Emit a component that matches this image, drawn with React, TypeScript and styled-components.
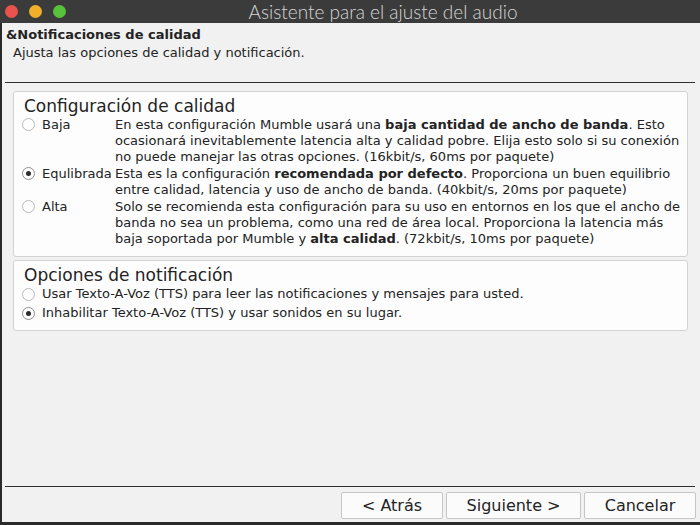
import React from 'react';
import styled, { createGlobalStyle } from 'styled-components';

interface QualityOption {
  id: string;
  label: string;
  lines: React.ReactNode[];
  checked?: boolean;
}

const qualityOptions: QualityOption[] = [
  {
    id: 'low',
    label: 'Baja',
    lines: [
      <>En esta configuración Mumble usará una <b>baja cantidad de ancho de banda</b>. Esto</>,
      <>ocasionará inevitablemente latencia alta y calidad pobre. Elija esto solo si su conexión</>,
      <>no puede manejar las otras opciones. (16kbit/s, 60ms por paquete)</>,
    ],
  },
  {
    id: 'balanced',
    label: 'Equlibrada',
    checked: true,
    lines: [
      <>Esta es la configuración <b>recomendada por defecto</b>. Proporciona un buen equilibrio</>,
      <>entre calidad, latencia y uso de ancho de banda. (40kbit/s, 20ms por paquete)</>,
    ],
  },
  {
    id: 'high',
    label: 'Alta',
    lines: [
      <>Solo se recomienda esta configuración para su uso en entornos en los que el ancho de</>,
      <>banda no sea un problema, como una red de área local. Proporciona la latencia más</>,
      <>baja soportada por Mumble y <b>alta calidad</b>. (72kbit/s, 10ms por paquete)</>,
    ],
  },
];

const notificationOptions = [
  { id: 'tts', label: 'Usar Texto-A-Voz (TTS) para leer las notificaciones y mensajes para usted.' },
  { id: 'sounds', label: 'Inhabilitar Texto-A-Voz (TTS) y usar sonidos en su lugar.', checked: true },
];

const App: React.FC = () => {
  return (
    <>
      <GlobalStyle />
      <Frame>
        <TitleBar>
          <Lights>
            <Light $color="#e9534c" />
            <Light $color="#f0b02a" />
            <Light $color="#57c33b" />
          </Lights>
          <WindowTitle>Asistente para el ajuste del audio</WindowTitle>
        </TitleBar>
        <Body>
          <PageTitle>&amp;Notificaciones de calidad</PageTitle>
          <PageSubtitle>Ajusta las opciones de calidad y notificación.</PageSubtitle>
          <Rule $top={21} />
          <Groups>
            <GroupBox>
              <GroupTitle>Configuración de calidad</GroupTitle>
              <QualityList>
                {qualityOptions.map((opt) => (
                  <QualityRow key={opt.id}>
                    <Radio $checked={opt.checked} />
                    <OptionLabel>{opt.label}</OptionLabel>
                    <Description>
                      {opt.lines.map((line, i) => (
                        <DescLine key={i}>{line}</DescLine>
                      ))}
                    </Description>
                  </QualityRow>
                ))}
              </QualityList>
            </GroupBox>
            <GroupBox>
              <GroupTitle>Opciones de notificación</GroupTitle>
              <NotifyList>
                {notificationOptions.map((opt) => (
                  <NotifyRow key={opt.id}>
                    <Radio $checked={opt.checked} />
                    <OptionLabel>{opt.label}</OptionLabel>
                  </NotifyRow>
                ))}
              </NotifyList>
            </GroupBox>
          </Groups>
          <Spacer />
          <Rule $top={0} />
          <ButtonRow>
            <Button $width={102}>&lt; Atrás</Button>
            <Button $width={135}>Siguiente &gt;</Button>
            <Button $width={112}>Cancelar</Button>
          </ButtonRow>
        </Body>
      </Frame>
    </>
  );
};

export default App;

const GlobalStyle = createGlobalStyle`
  html, body {
    margin: 0;
    padding: 0;
    background: #2a2a2a;
  }
  * {
    box-sizing: border-box;
  }
`;

const Frame = styled.div`
  width: 700px;
  height: 525px;
  display: flex;
  flex-direction: column;
  background: #2a2a2a;
  font-family: 'DejaVu Sans', sans-serif;
  font-size: 13px;
  color: #232323;
  overflow: hidden;
`;

const TitleBar = styled.div`
  height: 23px;
  flex: none;
  background: #3b3b3b;
  display: flex;
  align-items: center;
  position: relative;
`;

const Lights = styled.div`
  display: flex;
  gap: 11px;
  padding-left: 5px;
`;

const Light = styled.span<{ $color: string }>`
  width: 13px;
  height: 13px;
  border-radius: 50%;
  background: ${(p) => p.$color};
`;

const WindowTitle = styled.div`
  position: absolute;
  left: 0;
  right: 0;
  top: 0;
  line-height: 23px;
  text-align: center;
  padding-left: 66px;
  font-family: Lato, 'Open Sans', sans-serif;
  font-weight: 300;
  font-size: 19px;
  color: #d6d6d6;
`;

const Body = styled.div`
  height: 499px;
  flex: none;
  margin-left: 2px;
  background: #f1f1f1;
  display: flex;
  flex-direction: column;
  padding-top: 4px;
  padding-bottom: 3px;
`;

const PageTitle = styled.div`
  font-weight: bold;
  line-height: 16px;
  padding-left: 4px;
`;

const PageSubtitle = styled.div`
  line-height: 16px;
  margin-top: 2px;
  padding-left: 11px;
`;

const Rule = styled.div<{ $top: number }>`
  height: 1px;
  margin: ${(p) => p.$top}px 5px 0 3px;
  background: #2e2e2e;
  flex: none;
`;

const Groups = styled.div`
  display: flex;
  flex-direction: column;
  gap: 3px;
  margin: 8px 12px 0 11px;
`;

const GroupBox = styled.div`
  background: #fdfdfd;
  border: 1px solid #d3d3d3;
  border-radius: 3px;
  padding: 4px 8px 9px 8px;
`;

const GroupTitle = styled.div`
  font-size: 17px;
  line-height: 21px;
  padding-left: 2px;
`;

const QualityList = styled.div`
  display: flex;
  flex-direction: column;
  gap: 1px;
`;

const QualityRow = styled.div`
  display: grid;
  grid-template-columns: 20px 73px 1fr;
  align-items: start;
`;

const NotifyList = styled.div`
  display: flex;
  flex-direction: column;
  gap: 3px;
`;

const NotifyRow = styled.div`
  display: flex;
  align-items: center;
  gap: 7px;
`;

const Radio = styled.span<{ $checked?: boolean }>`
  width: 13px;
  height: 13px;
  margin-top: 1px;
  border-radius: 50%;
  border: 1px solid ${(p) => (p.$checked ? '#8f8f8f' : '#b9b9b9')};
  background: #ffffff;
  display: flex;
  align-items: center;
  justify-content: center;
  &::after {
    content: '';
    width: 5px;
    height: 5px;
    border-radius: 50%;
    background: #2b2b2b;
    display: ${(p) => (p.$checked ? 'block' : 'none')};
  }
  ${NotifyRow} & {
    margin-top: 0;
  }
`;

const OptionLabel = styled.span`
  line-height: 16px;
  white-space: nowrap;
`;

const Description = styled.div`
  display: flex;
  flex-direction: column;
`;

const DescLine = styled.span`
  line-height: 16px;
  white-space: nowrap;
`;

const Spacer = styled.div`
  flex: 1;
`;

const ButtonRow = styled.div`
  display: flex;
  justify-content: flex-end;
  gap: 3px;
  margin-top: 5px;
  padding-right: 4px;
`;

const Button = styled.button<{ $width: number }>`
  width: ${(p) => p.$width}px;
  height: 27px;
  font-family: 'DejaVu Sans', sans-serif;
  font-size: 16px;
  color: #232323;
  background: #fbfbfb;
  border: 1px solid #c6c6c6;
  border-radius: 2px;
  padding: 0;
`;
